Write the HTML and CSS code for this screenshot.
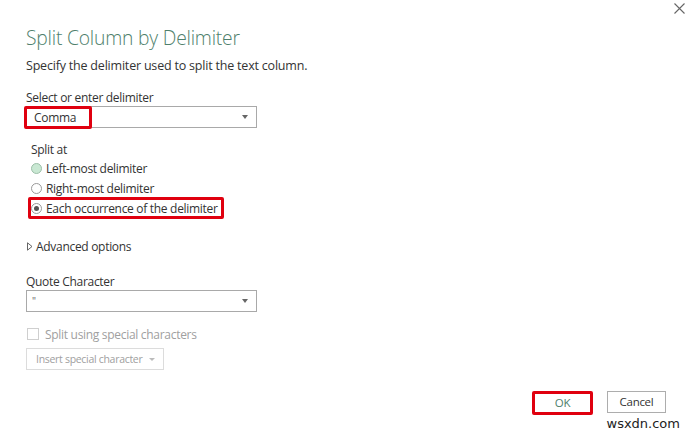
FILE: index.html
```html
<!DOCTYPE html>
<html>
<head>
<meta charset="utf-8">
<link rel="stylesheet" href="styles.css">
</head>
<body>
<div class="dialog">
  <div class="topbar">
    <svg class="close" width="11" height="11" viewBox="0 0 11 11"><path d="M0.5 0.5L10.5 10.5M10.5 0.5L0.5 10.5" stroke="#666" stroke-width="1.1" fill="none"/></svg>
  </div>
  <div class="content">
    <h1 class="title">Split Column by Delimiter</h1>
    <p class="subtitle">Specify the delimiter used to split the text column.</p>

    <div class="label first-label">Select or enter delimiter</div>
    <div class="combo">
      <span class="combo-value hl">Comma</span>
      <span class="caret"></span>
    </div>

    <div class="group">
      <div class="group-label">Split at</div>
      <div class="radio-row"><span class="radio hover"></span><span>Left-most delimiter</span></div>
      <div class="radio-row"><span class="radio"></span><span>Right-most delimiter</span></div>
      <div class="radio-row hl-row"><span class="radio checked"></span><span>Each occurrence of the delimiter</span></div>
    </div>

    <div class="advanced">
      <svg class="tri" width="6" height="9" viewBox="0 0 6 9"><path d="M0.5 0.8L5 4.5L0.5 8.2Z" fill="none" stroke="#555" stroke-width="0.9"/></svg>
      <span>Advanced options</span>
    </div>

    <div class="label q-label">Quote Character</div>
    <div class="combo">
      <span class="combo-value quote">"</span>
      <span class="caret"></span>
    </div>

    <div class="check-row">
      <span class="checkbox"></span>
      <span>Split using special characters</span>
    </div>
    <div class="insert-btn">Insert special character <span class="caret small"></span></div>
  </div>
  <div class="footer">
    <div class="btn ok">OK</div>
    <div class="btn cancel">Cancel</div>
  </div>
  <div class="watermark">wsxdn.com</div>
</div>
</body>
</html>
```
FILE: styles.css
```css
html, body {
  margin: 0;
  padding: 0;
  background: #fff;
}
body {
  font-family: "Open Sans", "Noto Sans", sans-serif;
  color: #333;
  font-size: 12px;
  letter-spacing: -0.3px;
}
.dialog {
  width: 691px;
  height: 434px;
  position: relative;
  overflow: hidden;
}
.topbar {
  display: flex;
  justify-content: flex-end;
  height: 14px;
  padding: 3px 6px 0 0;
}
.close {
  display: block;
}
.content {
  padding-left: 26px;
}
.title {
  margin: 8px 0 0 0;
  font-weight: 300;
  font-size: 19.3px;
  line-height: 26px;
  color: #4f7f6c;
  letter-spacing: -0.2px;
}
.subtitle {
  margin: 6px 0 0 0;
  font-size: 12.5px;
  line-height: 18px;
  color: #333;
  letter-spacing: -0.2px;
}
.label {
  line-height: 16px;
  font-size: 12px;
  color: #333;
}
.first-label {
  margin-top: 15px;
}
.combo {
  width: 229px;
  height: 20px;
  border: 1px solid #a9a9a9;
  display: flex;
  align-items: center;
  justify-content: space-between;
  box-sizing: content-box;
}
.combo-value {
  padding-left: 5px;
  font-size: 12px;
  color: #333;
}
.combo-value.hl {
  margin-left: -3px;
  padding: 0 13px 0 7px;
  border: 3px solid #e0000f;
  border-radius: 2px;
  height: 17px;
  line-height: 17px;
}
.combo-value.quote {
  color: #666;
  font-size: 10px;
}
.caret {
  width: 0;
  height: 0;
  border-left: 3.5px solid transparent;
  border-right: 3.5px solid transparent;
  border-top: 4px solid #666;
  margin-right: 8px;
}
.caret.small {
  display: inline-block;
  border-top-color: #bbb;
  border-left-width: 3px;
  border-right-width: 3px;
  border-top-width: 3px;
  margin: 0 0 2px 4px;
  vertical-align: middle;
}
.group {
  margin-top: 14px;
  padding-left: 5px;
}
.group-label {
  line-height: 16px;
  font-size: 12px;
}
.radio-row {
  display: flex;
  align-items: center;
  height: 20px;
  gap: 4px;
  font-size: 12px;
  width: max-content;
}
.radio {
  width: 9px;
  height: 9px;
  border-radius: 50%;
  border: 1px solid #999;
  background: #fff;
  box-sizing: content-box;
  position: relative;
}
.radio.hover {
  background: #c9e8d3;
  border-color: #9cbfa8;
}
.radio.checked::after {
  content: "";
  position: absolute;
  left: 2px;
  top: 2px;
  width: 5px;
  height: 5px;
  border-radius: 50%;
  background: #555;
}
.hl-row {
  box-sizing: border-box;
  border: 3px solid #e0000f;
  border-radius: 2px;
  margin: -1px 0 -1px -3px;
  padding: 0 3px 0 0;
  height: 22px;
}
.advanced {
  margin-top: 19px;
  display: flex;
  align-items: center;
  gap: 3px;
  height: 18px;
  font-size: 12px;
}
.tri { display: block; margin-left: 1px; }
.q-label {
  margin-top: 19px;
}
.check-row {
  margin-top: 14px;
  display: flex;
  align-items: center;
  gap: 6px;
  color: #a0a0a0;
  font-size: 12px;
  height: 16px;
}
.checkbox {
  width: 10px;
  height: 10px;
  border: 1px solid #cfcfcf;
  margin-left: 1px;
}
.insert-btn {
  margin-top: 6px;
  width: max-content;
  height: 20px;
  line-height: 20px;
  padding: 0 8px 0 9px;
  border: 1px solid #dcdcdc;
  color: #a0a0a0;
  font-size: 10.5px;
}
.footer {
  display: flex;
  justify-content: flex-end;
  gap: 14px;
  padding-right: 25px;
  margin-top: 21px;
}
.btn {
  height: 20px;
  line-height: 20px;
  text-align: center;
  font-size: 11.5px;
  border: 1px solid #adadad;
  color: #333;
  box-sizing: content-box;
}
.btn.ok {
  width: 55px;
  border: 3px solid #e0000f;
  border-radius: 2px;
  height: 18px;
  line-height: 18px;
  color: #4f7f6c;
}
.btn.cancel {
  width: 57px;
}
.watermark {
  position: absolute;
  right: 11px;
  bottom: 3px;
  font-family: "DejaVu Sans", sans-serif;
  font-size: 13px;
  color: #222;
  letter-spacing: 0;
}
```
